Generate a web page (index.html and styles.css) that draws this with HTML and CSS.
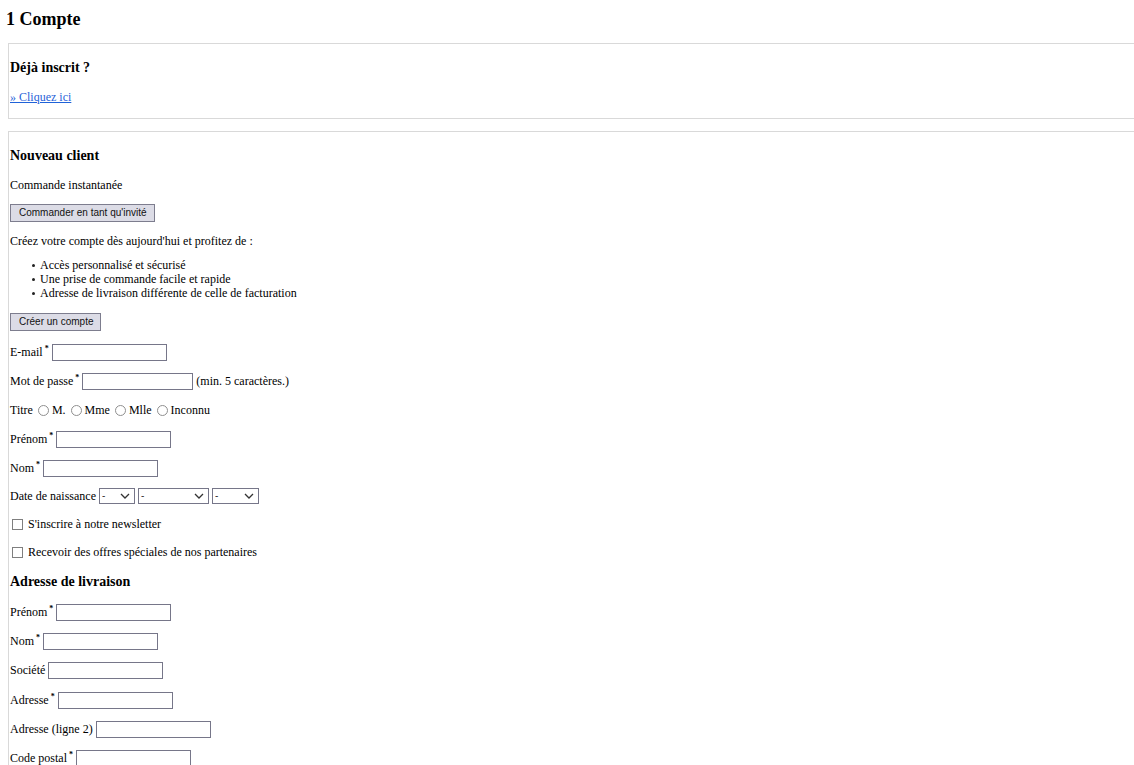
FILE: index.html
```html
<!DOCTYPE html>
<html lang="fr">
<head>
<meta charset="utf-8">
<title>Compte</title>
<link rel="stylesheet" href="styles.css">
</head>
<body>
<h1 class="title">1 Compte</h1>

<div class="box">
  <h3 class="box-title">Déjà inscrit ?</h3>
  <p class="text"><a class="link" href="#">» Cliquez ici</a></p>
</div>

<div class="box">
  <h3 class="box-title">Nouveau client</h3>
  <p class="text">Commande instantanée</p>
  <button class="btn" type="button">Commander en tant qu'invité</button>
  <p class="text intro">Créez votre compte dès aujourd'hui et profitez de :</p>
  <ul class="perks">
    <li>Accès personnalisé et sécurisé</li>
    <li>Une prise de commande facile et rapide</li>
    <li>Adresse de livraison différente de celle de facturation</li>
  </ul>
  <button class="btn" type="button">Créer un compte</button>

  <div class="row first">
    <label class="lbl">E-mail <sup class="req">*</sup></label>
    <input class="field" type="text">
  </div>
  <div class="row">
    <label class="lbl">Mot de passe <sup class="req">*</sup></label>
    <input class="field field-pw" type="password">
    <span class="hint">(min. 5 caractères.)</span>
  </div>
  <div class="row">
    <span class="lbl">Titre</span>
    <input class="radio" type="radio" name="t"><span class="opt">M.</span>
    <input class="radio" type="radio" name="t"><span class="opt">Mme</span>
    <input class="radio" type="radio" name="t"><span class="opt">Mlle</span>
    <input class="radio" type="radio" name="t"><span class="opt">Inconnu</span>
  </div>
  <div class="row">
    <label class="lbl">Prénom <sup class="req">*</sup></label>
    <input class="field" type="text">
  </div>
  <div class="row">
    <label class="lbl">Nom <sup class="req">*</sup></label>
    <input class="field" type="text">
  </div>
  <div class="row tight">
    <span class="lbl">Date de naissance</span>
    <select class="sel sel-day"><option>-</option></select>
    <select class="sel sel-month"><option>-</option></select>
    <select class="sel sel-year"><option>-</option></select>
  </div>
  <div class="row tight">
    <input class="checkbox" type="checkbox"><span class="opt">S'inscrire à notre newsletter</span>
  </div>
  <div class="row tight">
    <input class="checkbox" type="checkbox"><span class="opt">Recevoir des offres spéciales de nos partenaires</span>
  </div>

  <h3 class="sub-title">Adresse de livraison</h3>
  <div class="row">
    <label class="lbl">Prénom <sup class="req">*</sup></label>
    <input class="field" type="text">
  </div>
  <div class="row">
    <label class="lbl">Nom <sup class="req">*</sup></label>
    <input class="field" type="text">
  </div>
  <div class="row">
    <label class="lbl">Société</label>
    <input class="field" type="text">
  </div>
  <div class="row loose">
    <label class="lbl">Adresse <sup class="req">*</sup></label>
    <input class="field" type="text">
  </div>
  <div class="row">
    <label class="lbl">Adresse (ligne 2)</label>
    <input class="field" type="text">
  </div>
  <div class="row">
    <label class="lbl">Code postal <sup class="req">*</sup></label>
    <input class="field" type="text">
  </div>
  <div class="row">
    <label class="lbl">Ville <sup class="req">*</sup></label>
    <input class="field" type="text">
  </div>
  <div class="row">
    <label class="lbl">Pays <sup class="req">*</sup></label>
    <select class="sel sel-country"><option>-</option></select>
  </div>
</div>
</body>
</html>
```

FILE: styles.css
```css
html, body {
  margin: 0;
  padding: 0;
  background: #fff;
  overflow-x: hidden;
}
body {
  font-family: "Liberation Serif", "Times New Roman", serif;
  font-size: 12px;
  line-height: 14px;
  color: #000;
}
.title {
  font-size: 18px;
  line-height: 20px;
  font-weight: bold;
  margin: 9px 0 14px 6px;
}
.box {
  margin: 0 0 12px 8px;
  width: 1160px;
  border: 1px solid #d9d9d9;
  padding: 2px 2px 2px 1px;
}
.box-title {
  font-size: 14px;
  line-height: 16px;
  font-weight: bold;
  margin: 14px 0 14px;
}
.sub-title {
  font-size: 14px;
  line-height: 16px;
  font-weight: bold;
  margin: 13px 0 0;
}
.text {
  margin: 12px 0;
}
.text.intro {
  margin-bottom: 10px;
}
.link {
  color: #1f62d8;
  text-decoration: underline;
}
.btn {
  display: block;
  height: 18px;
  padding: 0 7px 0 8px;
  font-family: "Liberation Sans", Arial, sans-serif;
  font-size: 10px;
  line-height: 16px;
  color: #111;
  background: #dcdce6;
  border: 1px solid #7d7d8e;
  border-radius: 0;
  margin: 0;
}
.perks {
  margin: 0 0 13px;
  padding-left: 30px;
  list-style: none;
}
.perks li {
  position: relative;
}
.perks li::before {
  content: "";
  position: absolute;
  left: -8px;
  top: 6px;
  width: 3px;
  height: 3px;
  border-radius: 50%;
  background: #222;
}
.row {
  display: flex;
  align-items: center;
  height: 18px;
  margin: 11px 0 0;
}
.row.first {
  margin-top: 12px;
}
.row.tight {
  margin-top: 10px;
}
.row.loose {
  margin-top: 12px;
}
.sub-title + .row {
  margin-top: 13px;
}
.lbl {
  white-space: nowrap;
}
.req {
  font-size: 8px;
  line-height: 0;
  vertical-align: 0;
  position: relative;
  top: -5px;
  margin-left: -1px;
  font-weight: bold;
}
.field {
  width: 115px;
  box-sizing: border-box;
  height: 17px;
  border: 1px solid #767689;
  padding: 0 2px;
  margin: 0 0 0 3px;
  font-family: inherit;
  font-size: 12px;
  background: #fff;
  border-radius: 0;
  outline: none;
}
.field-pw {
  width: 111px;
}
.hint {
  margin-left: 3px;
}
.radio {
  appearance: none;
  -webkit-appearance: none;
  width: 11px;
  height: 11px;
  border: 1px solid #8f8f8f;
  border-radius: 50%;
  margin: 0 3px 0 5px;
  background: #fff;
  box-sizing: border-box;
}
.opt {
  white-space: nowrap;
}
.checkbox {
  appearance: none;
  -webkit-appearance: none;
  width: 11px;
  height: 11px;
  border: 1px solid #7f7f7f;
  margin: 0 5px 0 2px;
  background: #fff;
  box-sizing: border-box;
  border-radius: 0;
}
.sel {
  appearance: none;
  -webkit-appearance: none;
  height: 16px;
  box-sizing: border-box;
  border: 1px solid #767689;
  border-radius: 0;
  padding: 0 0 0 2px;
  margin: 0 0 0 3px;
  font-family: "Liberation Sans", Arial, sans-serif;
  font-size: 10px;
  line-height: 14px;
  color: #333;
  background-color: #fff;
  background-image: url("data:image/svg+xml;utf8,<svg xmlns='http://www.w3.org/2000/svg' width='10' height='6' viewBox='0 0 10 6'><path d='M1 1 L5 5 L9 1' fill='none' stroke='%23333' stroke-width='1.3'/></svg>");
  background-repeat: no-repeat;
  background-position: right 4px center;
}
.sel-day { width: 36px; }
.sel-month { width: 71px; }
.sel-year { width: 47px; }
.sel-country { width: 120px; }
```
